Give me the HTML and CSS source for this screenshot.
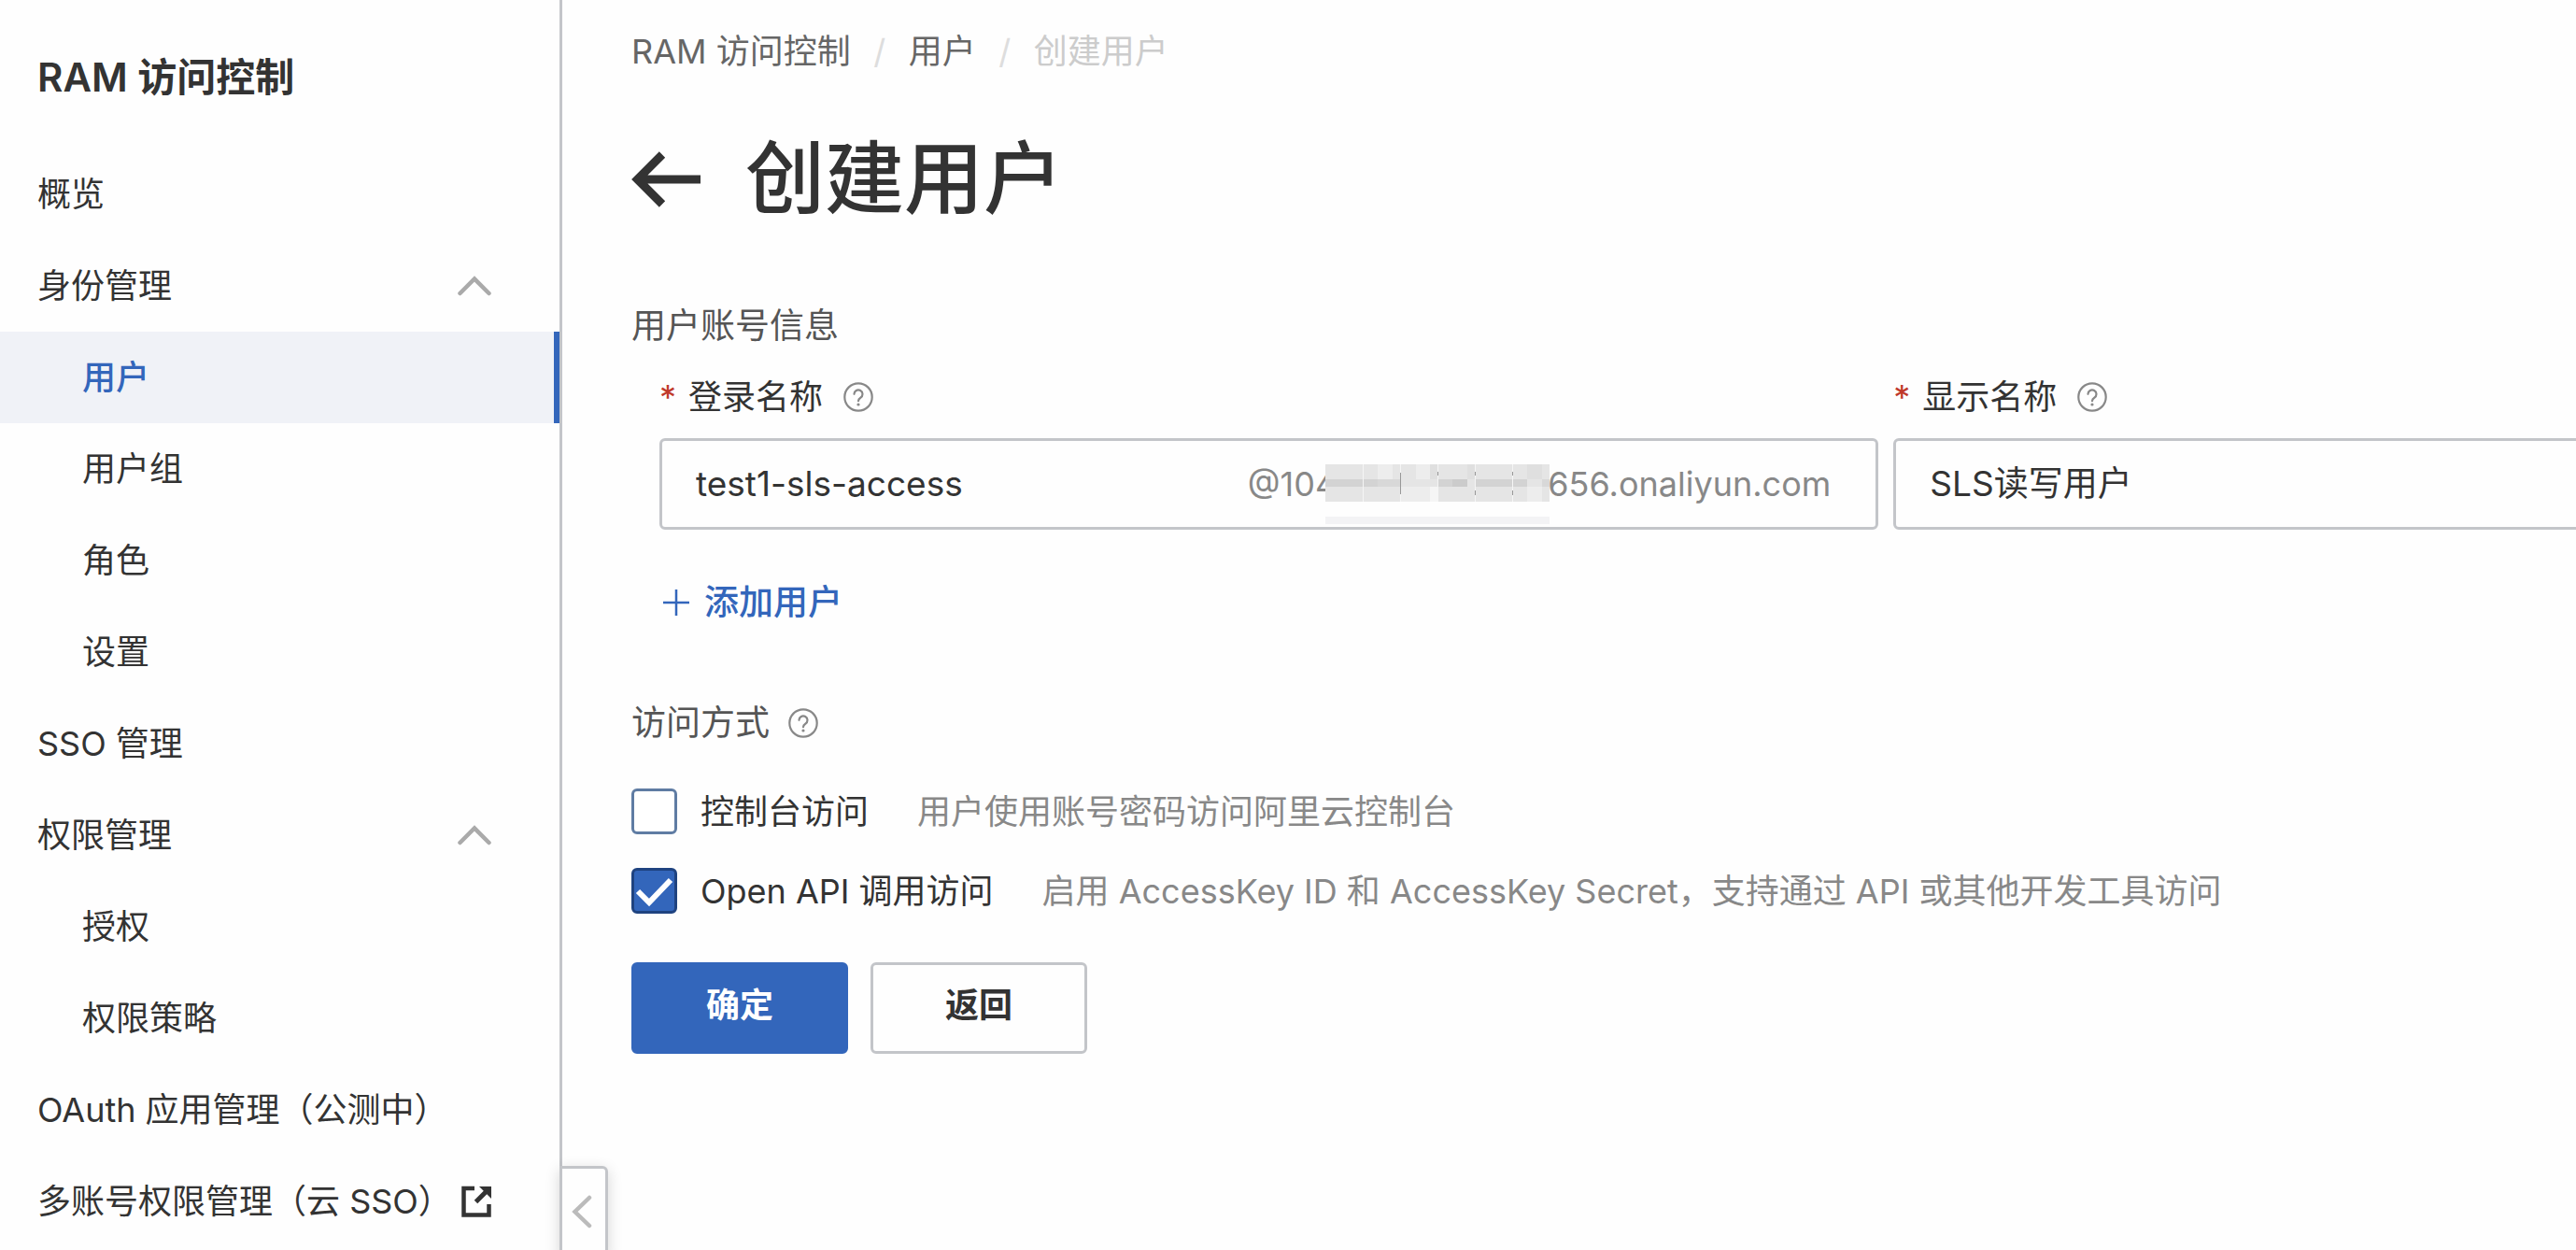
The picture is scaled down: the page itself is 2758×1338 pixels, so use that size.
FILE: index.html
```html
<!DOCTYPE html>
<html lang="zh-CN">
<head>
<meta charset="utf-8">
<meta name="viewport" content="width=device-width, initial-scale=1">
<title>RAM 访问控制</title>
<link rel="stylesheet" href="styles.css">
</head>
<body>
<svg class="symbols" aria-hidden="true">
  <symbol id="help" viewBox="0 0 32 32"><circle cx="16" cy="16" r="14.7" fill="none" stroke="currentColor" stroke-width="2.2"/><path d="M11.5 12.8a4.5 4.5 0 1 1 6.8 3.9c-1.5.9-2.3 1.6-2.3 3.5" fill="none" stroke="currentColor" stroke-width="2.2" stroke-linecap="round"/><circle cx="16" cy="24" r="1.6" fill="currentColor"/></symbol>
  <symbol id="chevron-up" viewBox="0 0 36 22"><path d="M2.500 19 18 3.500 33.500 19" fill="none" stroke="currentColor" stroke-width="4.500" stroke-linecap="round"/></symbol>
</svg>
<div class="layout">
  <aside class="sidebar">
    <h2 class="sidebar-title">RAM 访问控制</h2>
    <nav class="menu">
      <a class="item" href="#">概览</a>
      <a class="item" href="#">身份管理<svg class="chevron"><use href="#chevron-up"/></svg></a>
      <a class="item sub active" href="#">用户</a>
      <a class="item sub" href="#">用户组</a>
      <a class="item sub" href="#">角色</a>
      <a class="item sub" href="#">设置</a>
      <a class="item" href="#">SSO 管理</a>
      <a class="item" href="#">权限管理<svg class="chevron"><use href="#chevron-up"/></svg></a>
      <a class="item sub" href="#">授权</a>
      <a class="item sub" href="#">权限策略</a>
      <a class="item" href="#">OAuth 应用管理（公测中）</a>
      <a class="item" href="#">多账号权限管理（云 SSO）<svg class="external" viewBox="0 0 32 34"><path d="M14 3H2.500V31.500H29.500V20" fill="none" stroke="currentColor" stroke-width="4.500"/><path d="M15.500 17.500 27 6" fill="none" stroke="currentColor" stroke-width="5"/><path d="M19 1H32V14Z" fill="currentColor"/></svg></a>
    </nav>
    <button class="collapse" type="button" aria-label="收起"><svg class="collapse-icon" viewBox="0 0 22 36"><path d="M19 3 3.500 18 19 33" fill="none" stroke="currentColor" stroke-width="4.500" stroke-linecap="round"/></svg></button>
  </aside>
  <main class="main">
    <nav class="breadcrumb">
      <a href="#">RAM 访问控制</a><span class="slash">/</span><a href="#">用户</a><span class="slash">/</span><span class="current">创建用户</span>
    </nav>
    <header class="heading">
      <a class="back" href="#" aria-label="返回"><svg class="back-icon" viewBox="0 0 74 60"><path d="M74 30H8M33 3.500 6.500 30 33 56.500" fill="none" stroke="currentColor" stroke-width="9"/></svg></a>
      <h1>创建用户</h1>
    </header>
    <form>
      <section class="account">
        <h3 class="section-title">用户账号信息</h3>
        <div class="fields">
          <div class="field">
            <div class="label-row"><span class="star">*</span><label for="login">登录名称</label><svg class="help"><use href="#help"/></svg></div>
            <div class="box">
              <input id="login" type="text" value="test1-sls-access">
              <span class="suffix"><span>@104</span><svg class="mosaic" viewBox="0 0 240 64">
                <path fill="#e5e5e5" d="M0 0H240V40H0Z"/>
                <path fill="#ededed" d="M56 0H72V16H56ZM97 0H112V16H97ZM81 24H112V40H81ZM216 24H232V40H216Z"/>
                <path fill="#dfdfdf" d="M112 0H120V16H112ZM152 0H160V16H152ZM216 0H232V16H216Z"/>
                <path fill="#d3d3d3" d="M0 16H56V24H0ZM121 16H136V24H121ZM161 16H200V24H161ZM201 16H216V24H201Z"/>
                <path fill="#cbcbcb" d="M136 16H152V24H136Z"/>
                <path fill="#d8d8d8" d="M56 16H80V24H56ZM232 16H240V24H232Z"/>
                <path fill="#f5f5f5" d="M40 0H41V40H40ZM80 0H81V40H80ZM112 24H120V40H112ZM120 0H121V40H120ZM160 0H161V40H160ZM200 0H201V40H200Z"/>
                <path fill="#999" d="M80 9H81V32H80ZM120 8H121V12H120ZM160 8H161V12H160ZM160 28H161V33H160ZM200 8H201V12H200ZM200 28H201V33H200Z"/>
                <path fill="#f3f3f5" d="M0 56H240V64H0Z"/>
              </svg><span>656.onaliyun.com</span></span>
            </div>
          </div>
          <div class="field">
            <div class="label-row"><span class="star">*</span><label for="display">显示名称</label><svg class="help"><use href="#help"/></svg></div>
            <div class="box"><input id="display" type="text" value="SLS读写用户"></div>
          </div>
        </div>
        <button class="add" type="button"><svg class="plus" viewBox="0 0 28 28"><path d="M14 0V28M0 14H28" stroke="currentColor" stroke-width="2.500"/></svg>添加用户</button>
      </section>
      <section class="access">
        <h3 class="section-title">访问方式<svg class="help"><use href="#help"/></svg></h3>
        <div class="option"><input id="console" type="checkbox"><label for="console">控制台访问</label><span class="desc">用户使用账号密码访问阿里云控制台</span></div>
        <div class="option"><input id="api" type="checkbox" checked><label for="api">Open API 调用访问</label><span class="desc">启用 AccessKey ID 和 AccessKey Secret，支持通过 API 或其他开发工具访问</span></div>
      </section>
      <div class="actions">
        <button class="btn primary" type="submit">确定</button>
        <button class="btn" type="button">返回</button>
      </div>
    </form>
  </main>
</div>
</body>
</html>
```
FILE: styles.css
```css
* { box-sizing: border-box; }
body {
  margin: 0;
  background: #fefefe;
  color: #333;
  font: 36px/48px Inter, "Noto Sans CJK SC", sans-serif;
}
h1, h2, h3 { margin: 0; }
a { color: inherit; text-decoration: none; }
button, input { font: inherit; color: inherit; }
svg { flex: none; }
.symbols { position: absolute; width: 0; height: 0; }

.layout { display: flex; height: 100vh; overflow: hidden; }

.sidebar {
  position: relative;
  flex: none;
  width: 602px;
  border-right: 3px solid #c3c5c9;
}
.sidebar-title {
  padding: 51px 40px 44px;
  font-size: 42px;
  line-height: 64px;
  font-weight: 600;
}
.menu { display: flex; flex-direction: column; }
.item {
  display: flex;
  align-items: center;
  height: 98px;
  padding: 0 73px 0 40px;
  white-space: nowrap;
}
.sub { padding-left: 88px; }
.active {
  background: #f0f2f7;
  border-right: 6px solid #36b;
  color: #36b;
  font-weight: 500;
}
.chevron { width: 36px; height: 22px; margin-left: auto; color: #aaa; }
.external { width: 32px; height: 34px; margin-left: auto; }
.collapse {
  position: absolute;
  left: 599px;
  bottom: -8px;
  width: 52px;
  height: 98px;
  padding: 0 0 0 10px;
  border: 3px solid #c3c5c9;
  border-radius: 0 6px 6px 0;
  background: #fefefe;
  box-shadow: 0 4px 16px rgba(0, 0, 0, .16);
  color: #bbb;
}
.collapse-icon { display: block; width: 22px; height: 36px; }

.main { flex: 1; min-width: 0; padding: 31px 0 0 74px; overflow: hidden; }
.breadcrumb { display: flex; color: #666; }
.slash { width: 62px; text-align: center; color: #ddd; }
.current { color: #ccc; }

.heading { display: flex; align-items: center; gap: 48px; margin-top: 49px; }
.back { display: flex; }
.back-icon { width: 74px; height: 60px; }
h1 { font-size: 85px; line-height: 128px; font-weight: 500; }

.section-title {
  display: flex;
  align-items: center;
  gap: 20px;
  font-size: 37px;
  font-weight: 400;
  color: #555;
}
.help { width: 32px; height: 32px; color: #888; }
.account { margin-top: 69px; }
.fields { display: flex; gap: 16px; margin: 28px 0 0 30px; }
.field { flex: 0 0 calc(64% - 8px); }
.label-row { display: flex; align-items: center; height: 48px; }
.star { width: 31px; color: #c0392b; }
.label-row .help { margin-left: 22px; }
.box {
  display: flex;
  align-items: center;
  height: 98px;
  margin-top: 20px;
  padding: 0 48px 0 36px;
  border: 3px solid #c3c5c9;
  border-radius: 6px;
}
.box input { flex: 1; min-width: 0; padding: 0; border: 0; outline: 0; background: none; font-size: 37px; }
.suffix { display: flex; align-items: center; color: #888; }
.mosaic { position: relative; width: 240px; height: 64px; margin: 22px -2px 0 -12px; }
.add {
  display: flex;
  align-items: center;
  gap: 16px;
  margin: 54px 0 0 34px;
  padding: 0;
  border: 0;
  background: none;
  color: #36b;
  font-size: 37px;
  font-weight: 500;
}
.plus { width: 28px; height: 28px; }

.access { margin-top: 81px; }
.option { display: flex; align-items: center; height: 49px; margin-top: 36px; }
.access .section-title + .option { margin-top: 46px; }
.option input {
  appearance: none;
  width: 49px;
  height: 49px;
  margin: 0 25px 0 0;
  border: 3px solid #5f7ca3;
  border-radius: 6px;
  background: #fff;
}
.option input:checked {
  border-color: #1f4380;
  background: #36b url("data:image/svg+xml,%3Csvg xmlns='http://www.w3.org/2000/svg' viewBox='0 0 43 43'%3E%3Cpath d='M4 22 16 34 39 10' fill='none' stroke='white' stroke-width='6'/%3E%3C/svg%3E");
}
.desc { margin-left: 52px; color: #888; white-space: nowrap; }

.actions { display: flex; gap: 24px; margin-top: 52px; }
.btn {
  width: 232px;
  height: 98px;
  padding: 0 0 6px;
  border: 3px solid #c3c5c9;
  border-radius: 6px;
  background: #fefefe;
  font-weight: 600;
}
.primary { border-color: #36b; background: #36b; color: #fff; }
```
